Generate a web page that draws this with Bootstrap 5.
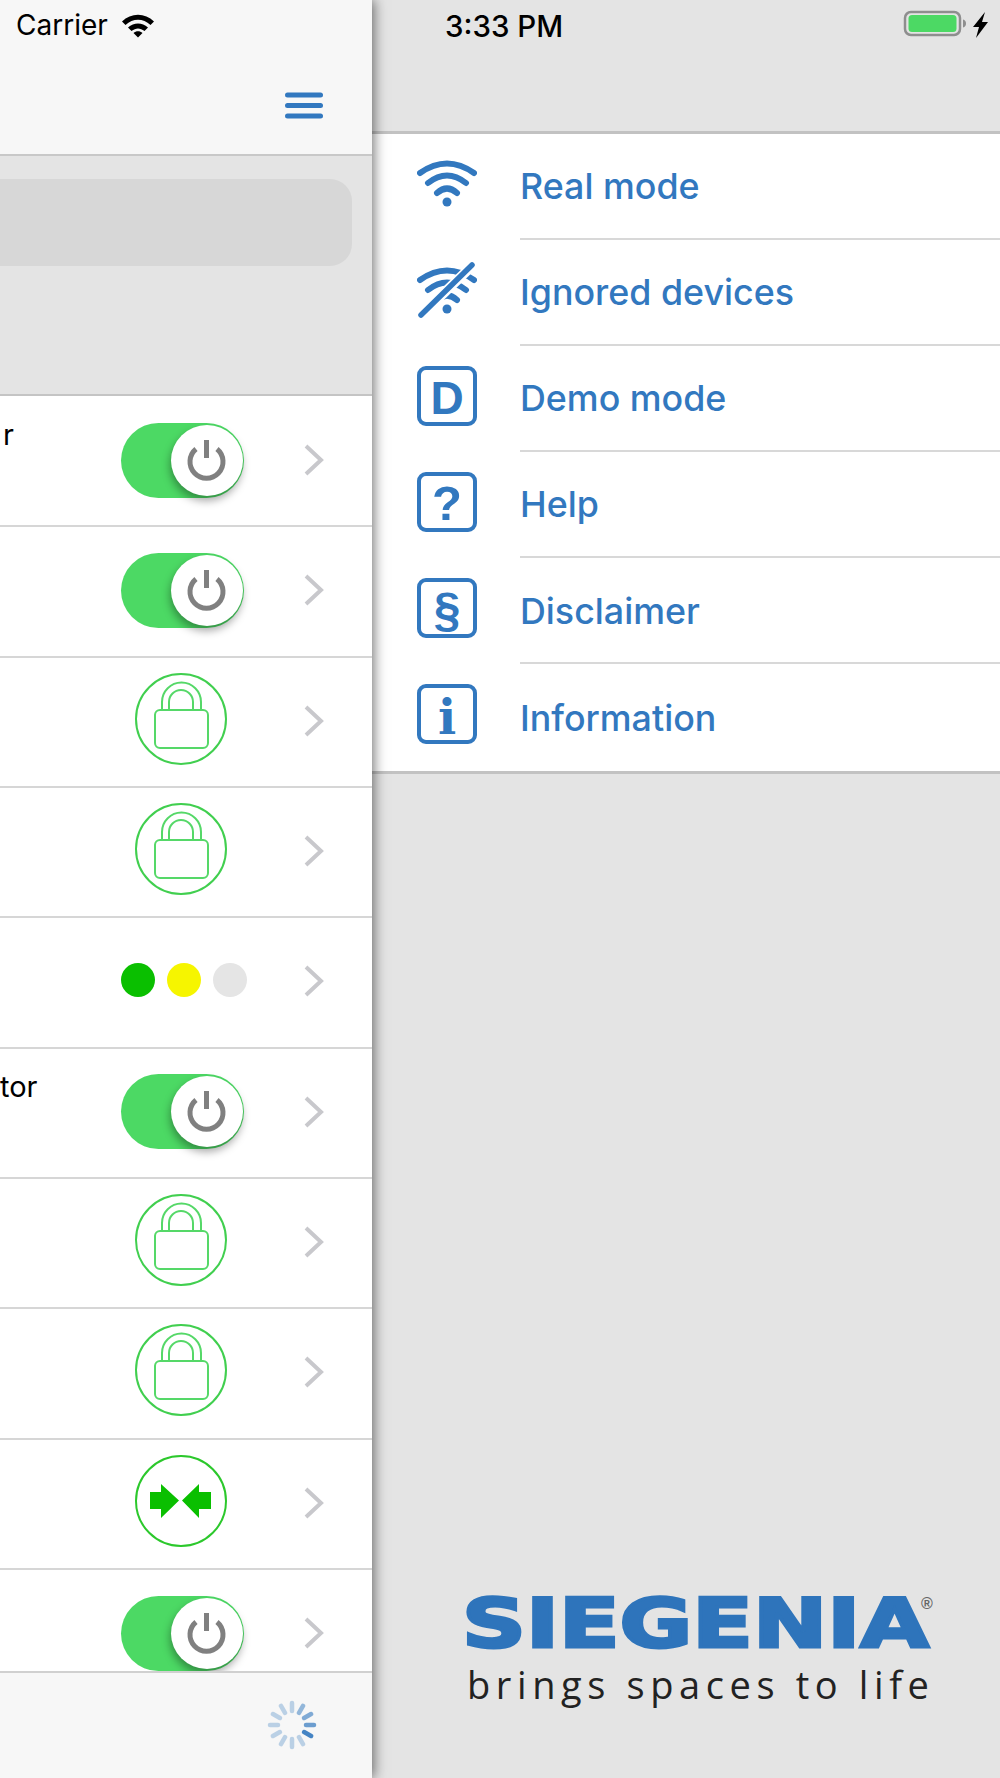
<!DOCTYPE html>
<html lang="en">
<head>
    <meta charset="UTF-8">
    <meta name="viewport" content="width=device-width, initial-scale=1.0">
    <title>Siegenia</title>
    <link href="https://cdn.jsdelivr.net/npm/bootstrap@5.3.0/dist/css/bootstrap.min.css" rel="stylesheet">
    <style>
        html, body { height: 100%; }
        body {
            background-color: #e4e4e4;
            font-family: Inter, "Liberation Sans", sans-serif;
            overflow: hidden;
            color: #000;
        }

        .app-shell { width: 1000px; height: 1778px; overflow: hidden; }

        /* left panel, pushed off canvas by the open menu */
        .main-panel {
            width: 372px;
            height: 1778px;
            flex: none;
            background-color: #fff;
            box-shadow: 2px 0 12px rgba(0, 0, 0, .55);
            position: relative;
            z-index: 2;
            overflow: hidden;
        }
        .main-head { height: 156px; background-color: #f7f7f7; border-bottom: 2px solid #c8c8c8; padding: 0 0 0 16px; position: relative; }
        .carrier-line { height: 50px; font-size: 28px; gap: 13px; }
        .menu-toggle { position: absolute; left: 285px; top: 92px; }
        .filter-area { height: 240px; background-color: #e4e4e4; border-bottom: 2px solid #c4c4c4; padding: 23px 20px 0 0; }
        .filter-field { height: 87px; background-color: #d7d7d7; border-radius: 0 22px 22px 0; }

        .device-list { height: 1275px; overflow: hidden; padding-top: 1px; }
        .device-row { height: 130.33px; border-bottom: 2px solid #d6d6d6; padding-bottom: 2px; position: relative; }
        .device-name { position: absolute; top: 22px; font-size: 29px; line-height: 32px; }
        .row-state { width: 124px; margin-left: 121px; }
        .row-chevron { margin-left: 59px; flex: none; }

        .power-switch {
            width: 123px;
            height: 75px;
            background-color: #4cd964;
            border-radius: 38px;
            position: relative;
        }
        .power-knob {
            position: absolute;
            right: 1px;
            top: 2px;
            width: 72px;
            height: 71px;
            border-radius: 50%;
            background-color: #fff;
            box-shadow: -1px 5px 9px rgba(0, 0, 0, .35);
        }
        .state-circle { padding-right: 4px; margin-bottom: 4px; }
        .state-dots { margin-bottom: 3px; gap: 12px; }
        .state-dot { width: 34px; height: 34px; border-radius: 50%; flex: none; }
        .dot-green { background-color: #0abf00; }
        .dot-yellow { background-color: #f6f500; }
        .dot-grey { background-color: #e5e5e5; }

        .bottom-bar { height: 107px; background-color: #f7f7f7; border-top: 2px solid #d0d0d0; padding: 27px 0 0 267px; position: relative; z-index: 1; }

        /* right panel */
        .side-panel { width: 628px; flex: none; height: 1778px; background-color: #e4e4e4; }
        .side-status { height: 131px; position: relative; }
        .clock-text { position: absolute; left: 73px; top: 10px; font-size: 29.500px; font-weight: 500; line-height: 32px; }
        .battery-icon { position: absolute; left: 531px; top: 10px; }
        .side-menu { background-color: #fff; border-top: 3px solid #c2c2c2; border-bottom: 3px solid #c2c2c2; }
        .side-item { height: 106.100px; }
        .side-icon { width: 148px; flex: none; padding-left: 45px; }
        .side-icon svg { display: block; margin-bottom: 7px; }
        .side-label {
            flex: 1;
            height: 100%;
            padding-top: 2px;
            font-size: 35.800px;
            font-weight: 500;
            color: #3278bf;
            border-bottom: 2px solid #d8d8d8;
        }
        .side-item:last-child .side-label { border-bottom: 0; }

        .brand-wrap { padding: 0 0 0 89px; margin-top: 806px; }
    </style>
</head>
<body>
    <div class="app-shell d-flex">

        <!-- left panel -->
        <div class="main-panel d-flex flex-column">
            <div class="main-head">
                <div class="carrier-line d-flex align-items-center">
                    <span>Carrier</span>
                    <svg width="34" height="25" viewBox="0 0 34 25">
                        <path d="M1 8.500C10 -0.500 24 -0.500 33 8.500L29.500 12C22 5 12 5 4.500 12Z" fill="#000"/>
                        <path d="M7 14.500C13 9 21 9 27 14.500L23.500 18C19 14.500 15 14.500 10.500 18Z" fill="#000"/>
                        <path d="M12.500 20C15 17.500 19 17.500 21.500 20L17 24.500Z" fill="#000"/>
                    </svg>
                </div>
                <div class="menu-toggle">
                    <svg width="38" height="27" viewBox="0 0 38 27">
                        <g stroke="#3278bf" stroke-width="5" stroke-linecap="round">
                            <line x1="2.500" y1="3" x2="35.500" y2="3"/>
                            <line x1="2.500" y1="13.500" x2="35.500" y2="13.500"/>
                            <line x1="2.500" y1="24" x2="35.500" y2="24"/>
                        </g>
                    </svg>
                </div>
            </div>

            <div class="filter-area">
                <div class="filter-field"></div>
            </div>

            <div class="device-list" id="deviceList"></div>

            <div class="bottom-bar">
                <svg width="50" height="50" viewBox="-25 -25 50 50" id="spinner"></svg>
            </div>
        </div>

        <!-- right panel -->
        <div class="side-panel d-flex flex-column">
            <div class="side-status">
                <span class="clock-text">3:33 PM</span>
                <svg class="battery-icon" width="88" height="30" viewBox="0 0 88 30">
                    <rect x="2" y="2" width="55" height="23" rx="6" fill="none" stroke="#8e8e8e" stroke-width="2.500"/>
                    <rect x="5.500" y="5" width="48" height="17" rx="3.500" fill="#4cd964"/>
                    <path d="M60 9.500c2 .5 3 2 3 4s-1 3.500-3 4z" fill="#8e8e8e"/>
                    <path d="M82 2L70 17h6l-3 11 12-16h-6z" fill="#000"/>
                </svg>
            </div>

            <div class="side-menu">
                <div class="side-item d-flex align-items-center">
                    <div class="side-icon">
                        <svg width="60" height="60" viewBox="0 0 60 60" fill="none" stroke="#3278bf" stroke-width="6" stroke-linecap="round">
                            <path d="M3 19Q30 0 57 19"/>
                            <path d="M11 29Q30 14 49 29"/>
                            <path d="M20 39Q30 30 40 39"/>
                            <circle cx="30" cy="48" r="4.500" fill="#3278bf" stroke="none"/>
                        </svg>
                    </div>
                    <div class="side-label d-flex align-items-center">Real mode</div>
                </div>
                <div class="side-item d-flex align-items-center">
                    <div class="side-icon">
                        <svg width="60" height="60" viewBox="0 0 60 60" fill="none" stroke="#3278bf" stroke-width="6" stroke-linecap="round">
                            <path d="M3 20Q30 1 57 20"/>
                            <path d="M11 30Q30 15 49 30"/>
                            <path d="M20 40Q30 31 40 40"/>
                            <circle cx="30" cy="49" r="4.500" fill="#3278bf" stroke="none"/>
                            <path d="M3 56L56 5" stroke="#fff" stroke-width="10" stroke-linecap="butt"/>
                            <path d="M4 55L55 5" stroke-width="5.500"/>
                        </svg>
                    </div>
                    <div class="side-label d-flex align-items-center">Ignored devices</div>
                </div>
                <div class="side-item d-flex align-items-center">
                    <div class="side-icon">
                        <svg width="60" height="60" viewBox="0 0 60 60">
                            <rect x="2" y="2" width="56" height="56" rx="7" fill="none" stroke="#3278bf" stroke-width="4"/>
                            <text x="30" y="48" text-anchor="middle" font-family="Liberation Sans, sans-serif" font-weight="700" font-size="46" fill="#3278bf">D</text>
                        </svg>
                    </div>
                    <div class="side-label d-flex align-items-center">Demo mode</div>
                </div>
                <div class="side-item d-flex align-items-center">
                    <div class="side-icon">
                        <svg width="60" height="60" viewBox="0 0 60 60">
                            <rect x="2" y="2" width="56" height="56" rx="7" fill="none" stroke="#3278bf" stroke-width="4"/>
                            <text x="30" y="48" text-anchor="middle" font-family="Liberation Sans, sans-serif" font-weight="700" font-size="49" fill="#3278bf">?</text>
                        </svg>
                    </div>
                    <div class="side-label d-flex align-items-center">Help</div>
                </div>
                <div class="side-item d-flex align-items-center">
                    <div class="side-icon">
                        <svg width="60" height="60" viewBox="0 0 60 60">
                            <rect x="2" y="2" width="56" height="56" rx="7" fill="none" stroke="#3278bf" stroke-width="4"/>
                            <text x="30" y="47.500" text-anchor="middle" font-family="Liberation Sans, sans-serif" font-weight="700" font-size="48" fill="#3278bf">§</text>
                        </svg>
                    </div>
                    <div class="side-label d-flex align-items-center">Disclaimer</div>
                </div>
                <div class="side-item d-flex align-items-center">
                    <div class="side-icon">
                        <svg width="60" height="60" viewBox="0 0 60 60">
                            <rect x="2" y="2" width="56" height="56" rx="7" fill="none" stroke="#3278bf" stroke-width="4"/>
                            <text x="30" y="50" text-anchor="middle" font-family="DejaVu Serif, serif" font-weight="700" font-size="48" fill="#3278bf">i</text>
                        </svg>
                    </div>
                    <div class="side-label d-flex align-items-center">Information</div>
                </div>
            </div>

            <div class="brand-wrap">
                <svg width="500" height="134" viewBox="0 0 500 134">
                    <text transform="translate(1 67) scale(1.305 1)" font-family="DejaVu Sans, sans-serif" font-weight="700" font-size="68" fill="#2e74bb" stroke="#2e74bb" stroke-width="3">SIEGENIA</text>
                    <text x="460" y="29" font-family="Liberation Sans, sans-serif" font-weight="700" font-size="16" fill="#666">®</text>
                    <text x="6" y="119" font-family="Open Sans, sans-serif" font-size="38" letter-spacing="5.600" fill="#222">brings spaces to life</text>
                </svg>
            </div>
        </div>
    </div>

    <script>
        const powerIcon = '<svg width="71" height="71" viewBox="0 0 71 71" fill="none" stroke="#808080" stroke-width="5"><path d="M25 24A16.500 16.500 0 1 0 46 24"/><path d="M35.500 15V33"/></svg>';
        const lockIcon = '<svg width="94" height="94" viewBox="0 0 94 94" fill="none" stroke="#41cf4f" stroke-width="2"><circle cx="47" cy="47" r="45"/><g stroke="#55d868"><path d="M28 38V30A19.500 19.500 0 0 1 67 30V38"/><path d="M35 38V30A12 12 0 0 1 59 30V38Z"/><rect x="21" y="38" width="53" height="38" rx="5"/></g></svg>';
        const arrowsIcon = '<svg width="94" height="94" viewBox="0 0 94 94"><circle cx="47" cy="47" r="45" fill="none" stroke="#2cc82c" stroke-width="2"/><path d="M16 38H27V30L45 46.500L27 64V55H16Z" fill="#0abf00"/><path d="M77 38H65V30L48 46.500L65 64V55H77Z" fill="#0abf00"/></svg>';
        const chevron = '<svg class="row-chevron" width="20" height="32" viewBox="0 0 20 32" fill="none" stroke="#c8c8cc" stroke-width="4"><path d="M2 2L17 16L2 30"/></svg>';

        const rows = [
            { kind: 'power', name: 'r', left: 3 },
            { kind: 'power' },
            { kind: 'lock' },
            { kind: 'lock' },
            { kind: 'dots' },
            { kind: 'power', name: 'tor', left: 0 },
            { kind: 'lock' },
            { kind: 'lock' },
            { kind: 'arrows' },
            { kind: 'power' }
        ];

        function stateHtml(kind) {
            if (kind === 'power') return '<div class="power-switch"><div class="power-knob">' + powerIcon + '</div></div>';
            if (kind === 'lock') return '<div class="state-circle d-flex justify-content-center">' + lockIcon + '</div>';
            if (kind === 'arrows') return '<div class="state-circle d-flex justify-content-center">' + arrowsIcon + '</div>';
            return '<div class="state-dots d-flex"><div class="state-dot dot-green"></div><div class="state-dot dot-yellow"></div><div class="state-dot dot-grey"></div></div>';
        }

        document.getElementById('deviceList').innerHTML = rows.map(r =>
            '<div class="device-row d-flex align-items-center">' +
            (r.name ? '<span class="device-name" style="left:' + r.left + 'px">' + r.name + '</span>' : '') +
            '<div class="row-state">' + stateHtml(r.kind) + '</div>' + chevron + '</div>'
        ).join('');

        // spinner ticks, darkest one just past 3 o'clock
        const opac = [.9, .7, .6, .5, .3, .3, .3, .3, .3, .3, .3, .3];
        let ticks = '';
        for (let i = 0; i < 12; i++) {
            const a = (30 - i * 30) * Math.PI / 180;
            const x1 = 14 * Math.cos(a), y1 = 14 * Math.sin(a), x2 = 22 * Math.cos(a), y2 = 22 * Math.sin(a);
            ticks += '<line x1="' + x1 + '" y1="' + y1 + '" x2="' + x2 + '" y2="' + y2 + '" stroke="#3278bf" stroke-width="4.500" stroke-linecap="round" opacity="' + opac[i] + '"/>';
        }
        document.getElementById('spinner').innerHTML = ticks;
    </script>
    <script src="https://cdn.jsdelivr.net/npm/bootstrap@5.3.0/dist/js/bootstrap.bundle.min.js"></script>
</body>
</html>
